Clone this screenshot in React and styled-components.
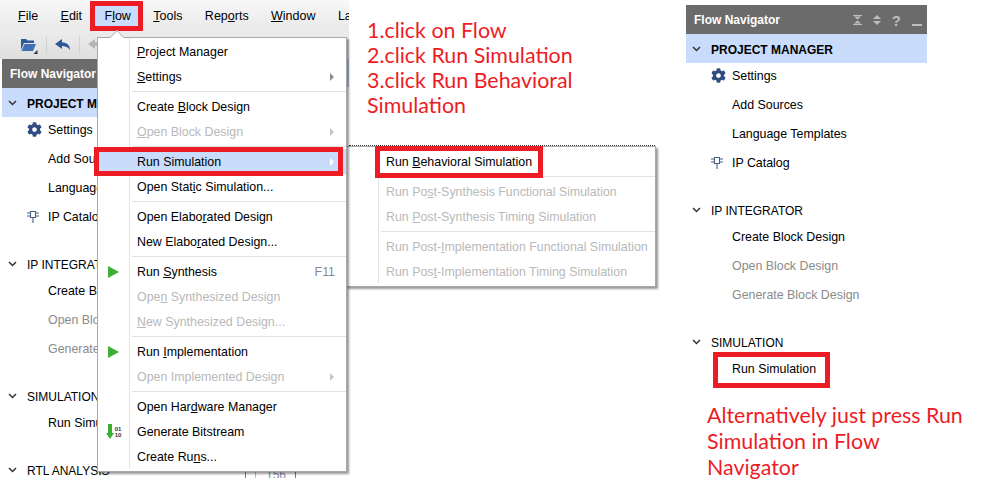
import styled, { createGlobalStyle } from "styled-components";
import { FaCog } from "react-icons/fa";

const GlobalStyle = createGlobalStyle`
  html, body {
    margin: 0;
    background: #fff;
  }
`;

const RED = "#ed1c24";
const SELECTED = "#c9dcfb";

const Page = styled.div`
  position: relative;
  display: flex;
  width: 995px;
  height: 492px;
  overflow: hidden;
  font-family: "Liberation Sans", Arial, sans-serif;
  font-size: 12.4px;
  color: #000;
`;

const Ide = styled.div`
  display: flex;
  flex-direction: column;
  flex: 0 0 349px;
  height: 478px;
  overflow: hidden;
`;

const MenuBar = styled.div`
  display: flex;
  flex: 0 0 30px;
  align-items: center;
  gap: 22.4px;
  padding: 1px 0 0 18px;
  box-sizing: border-box;
  font-size: 12.5px;
  background: linear-gradient(#f8f8f8, #e9e9e9);
  isolation: isolate;
`;

const MenuName = styled.span`
  position: relative;
  white-space: nowrap;
`;

const Mark = styled.span`
  position: absolute;
  border: 5px solid ${RED};
  box-sizing: border-box;
  pointer-events: none;
`;

const FlowMark = styled(Mark)`
  left: -14px;
  top: -8px;
  width: 53px;
  height: 30px;
  background: ${SELECTED};
  z-index: -1;
`;

const Toolbar = styled.div`
  display: flex;
  flex: 0 0 29px;
  align-items: center;
  gap: 8px;
  padding-left: 20px;
  background: linear-gradient(#ececec, #dfdfdf);
`;

const ToolDivider = styled.span`
  width: 1px;
  height: 18px;
  background: #d2d2d2;
`;

const Workspace = styled.div`
  display: flex;
  flex: 1;
  min-height: 0;
`;

const LeftPanel = styled.div`
  flex: 0 0 243px;
  margin-left: 2px;
`;

const Editor = styled.div`
  display: flex;
  flex: 1;
  flex-direction: column;
  justify-content: flex-end;
  border-left: 1px solid #777;
`;

const EditorTabs = styled.div`
  height: 28px;
  margin-bottom: auto;
  background: #b9c9e4;
`;

const Gutter = styled.div`
  width: 41px;
  margin-left: 9px;
  padding-left: 10px;
  height: 9px;
  border-left: 1px solid #bbb;
  border-right: 1px solid #777;
  font-size: 12px;
  line-height: 13px;
  color: #8a8fa8;
  overflow: hidden;
  box-sizing: border-box;
`;

/* Flow Navigator */
const NavHeader = styled.div`
  display: flex;
  align-items: center;
  height: 29px;
  padding: 1px 5px 0 8px;
  box-sizing: border-box;
  background: #6b6b6b;
  color: #fff;
  font-weight: bold;
  font-size: 12px;
  white-space: nowrap;
`;

const NavTools = styled.div`
  display: flex;
  align-items: center;
  gap: 11px;
  margin-left: auto;
  color: #bdbdbd;
  font-size: 15px;
`;

const NavSection = styled.section`
  margin-bottom: 18px;
`;

const NavHead = styled.div`
  display: flex;
  align-items: center;
  gap: 10px;
  height: 29px;
  padding: 2px 0 0 6px;
  box-sizing: border-box;
  font-size: 12px;
  white-space: nowrap;
  background: ${(p) => (p.$active ? SELECTED : "transparent")};
  font-weight: ${(p) => (p.$active ? "bold" : "normal")};
`;

const NavList = styled.div`
  margin-top: -2px;
`;

const NavItem = styled.div`
  position: relative;
  display: flex;
  align-items: center;
  height: 29px;
  padding-left: 46px;
  white-space: nowrap;
  color: ${(p) => (p.$disabled ? "#8b8b8b" : "#000")};
`;

const NavIcon = styled.span`
  position: absolute;
  left: 25px;
  top: 0;
  bottom: 0;
  display: flex;
  align-items: center;
  color: #2f4d82;
`;

const NavMark = styled(Mark)`
  left: 27px;
  top: -2px;
  width: 117px;
  height: 36px;
`;

/* Menus */
const Menu = styled.div`
  position: absolute;
  box-sizing: border-box;
  padding: 1px 0 2px;
  background: #fff;
  border: 1px solid #a8a8a8;
  box-shadow: 2px 2px 2px rgba(0, 0, 0, 0.4);

  &::before {
    content: "";
    position: absolute;
    left: 31px;
    top: 0;
    bottom: 3px;
    width: 1px;
    background: #e4e4e4;
  }
`;

const FlowMenu = styled(Menu)`
  left: 97px;
  top: 37px;
  width: 250px;
  z-index: 3;
`;

const Notch = styled.span`
  position: absolute;
  left: 14px;
  top: -6px;
  width: 9px;
  height: 9px;
  background: #fff;
  transform: rotate(45deg);
  border: 1px solid #bbb;
  border-right: none;
  border-bottom: none;
`;

const SubMenu = styled(Menu)`
  left: 346px;
  top: 146px;
  width: 310px;
  height: 141px;
  padding-top: 2px;
  z-index: 2;
`;

const DottedEdge = styled.span`
  position: absolute;
  left: 2px;
  right: 0;
  top: -2px;
  border-top: 1px dotted #333;
`;

const Item = styled.div`
  position: relative;
  display: grid;
  grid-template-columns: 39px 1fr auto 20px;
  align-items: center;
  height: 25px;
  white-space: nowrap;
  color: ${(p) => (p.$disabled ? "#b9b9b9" : "#000")};
  background: ${(p) => (p.$selected ? SELECTED : "transparent")};
`;

const IsolatedItem = styled(Item)`
  isolation: isolate;
`;

const ItemIcon = styled.span`
  display: flex;
  justify-content: center;
  align-items: center;
  padding-right: 8px;
`;

const Shortcut = styled.span`
  margin-right: -9px;
  color: #8a8a8a;
`;

const Arrow = styled.span`
  grid-column: 4;
  justify-self: center;
  margin-right: 8px;
  width: 0;
  height: 0;
  border-top: 4px solid transparent;
  border-bottom: 4px solid transparent;
  border-left: 4px solid ${(p) => p.$color || "#8d8d8d"};
`;

const Separator = styled.div`
  height: 1px;
  margin: 2px 0 2px 34px;
  background: #e2e2e2;
`;

const RunSimMark = styled(Mark)`
  left: -4px;
  top: -2px;
  width: 249px;
  height: 29px;
  z-index: 4;
`;

const BehavioralMark = styled(Mark)`
  left: 28px;
  top: -3px;
  width: 168px;
  height: 32px;
  background: #fff;
  z-index: -1;
`;

const SubItemLabel = styled.span`
  position: relative;
  z-index: 1;
`;

const BitCode = styled.span`
  font-size: 6px;
  font-weight: bold;
  line-height: 6px;
  color: #333;
  margin-left: 1px;
`;

/* Notes column */
const NotesColumn = styled.div`
  flex: 0 0 319px;
  padding: 18px 0 0 18px;
`;

const Note = styled.p`
  margin: 0;
  font-family: Lato, "Open Sans", sans-serif;
  font-size: 21.4px;
  color: ${RED};
  line-height: 25px;
  width: ${(p) => p.$width}px;
`;

const SideColumn = styled.div`
  display: flex;
  flex-direction: column;
  padding-top: 5px;
`;

const SidePanel = styled.div`
  width: 241px;
`;

const SideNote = styled(Note)`
  margin: 1px 0 0 21px;
  line-height: 26px;
`;

const Chevron = () => (
  <svg width="9" height="7" viewBox="0 0 9 7" fill="none" stroke="#333" strokeWidth="1.5">
    <path d="M1 1l3.500 3.500L8 1" />
  </svg>
);

const ChipIcon = () => (
  <svg width="12" height="13" viewBox="0 0 12 13" fill="none" stroke="#4a6087" strokeWidth="1.1">
    <path d="M3.500 1.500h5v6h-5zM6 7.500V13M0 3h3.500M0 6h3.500M8.500 3H12M8.500 6H12" />
  </svg>
);

const FolderIcon = () => (
  <svg width="18" height="18" viewBox="0 0 18 18">
    <path d="M1 3h5l1.500 1.500H14V7H4L1 14z" fill="#2f5a9a" />
    <path d="M1.500 15l3-7H16l-3 7z" fill="#3f6fb5" />
    <path d="M17.500 18h-4l4-4z" fill="#333" />
  </svg>
);

const UndoIcon = ({ color }) => (
  <svg width="16" height="12" viewBox="0 0 16 12">
    <path d="M7 0L0 5l7 5V7c3 0 6 1 8 4 0-5-3-7.500-8-7.500z" fill={color} />
  </svg>
);

const PlayIcon = () => (
  <svg width="11" height="12" viewBox="0 0 11 12">
    <path d="M0 0l11 6L0 12z" fill="#3cae33" />
  </svg>
);

const BitstreamIcon = () => (
  <>
    <svg width="8" height="15" viewBox="0 0 8 15">
      <path d="M2 0h4v9h2l-4 6-4-6h2z" fill="#3cae33" />
    </svg>
    <BitCode>
      01
      <br />
      10
    </BitCode>
  </>
);

const CollapseIcon = () => (
  <svg width="9" height="10" viewBox="0 0 9 10" fill="#bdbdbd">
    <path d="M0 0h9v1H0zM1 1.500h7L4.500 4.500zM4.500 5.500L8 8.500H1zM0 9h9v1H0z" />
  </svg>
);

const SortIcon = () => (
  <svg width="8" height="10" viewBox="0 0 8 10" fill="#bdbdbd">
    <path d="M4 0l4 4H0zM0 6h8l-4 4z" />
  </svg>
);

const MinimizeIcon = () => (
  <svg width="10" height="12" viewBox="0 0 10 12" fill="#bdbdbd">
    <path d="M0 10h10v2H0z" />
  </svg>
);

const navSections = [
  {
    title: "PROJECT MANAGER",
    active: true,
    items: [
      { label: "Settings", icon: <FaCog size={15} /> },
      { label: "Add Sources" },
      { label: "Language Templates" },
      { label: "IP Catalog", icon: <ChipIcon /> },
    ],
  },
  {
    title: "IP INTEGRATOR",
    items: [
      { label: "Create Block Design" },
      { label: "Open Block Design", disabled: true },
      { label: "Generate Block Design", disabled: true },
    ],
  },
  {
    title: "SIMULATION",
    items: [{ label: "Run Simulation", marked: true }],
  },
];

const FlowNavigator = ({ showTools, marked, extraSection }) => (
  <>
    <NavHeader>
      Flow Navigator
      {showTools && (
        <NavTools>
          <CollapseIcon />
          <SortIcon />
          <span>?</span>
          <MinimizeIcon />
        </NavTools>
      )}
    </NavHeader>
    {navSections.map((section) => (
      <NavSection key={section.title}>
        <NavHead $active={section.active}>
          <Chevron />
          {section.title}
        </NavHead>
        <NavList>
          {section.items.map((item) => (
            <NavItem key={item.label} $disabled={item.disabled}>
              {item.icon && <NavIcon>{item.icon}</NavIcon>}
              {item.label}
              {marked && item.marked && <NavMark />}
            </NavItem>
          ))}
        </NavList>
      </NavSection>
    ))}
    {extraSection && (
      <NavHead>
        <Chevron />
        {extraSection}
      </NavHead>
    )}
  </>
);

const App = () => {
  return (
    <Page>
      <GlobalStyle />
      <Ide>
        <MenuBar>
          <MenuName><u>F</u>ile</MenuName>
          <MenuName><u>E</u>dit</MenuName>
          <MenuName>
            F<u>l</u>ow
            <FlowMark />
          </MenuName>
          <MenuName><u>T</u>ools</MenuName>
          <MenuName>Rep<u>o</u>rts</MenuName>
          <MenuName><u>W</u>indow</MenuName>
          <MenuName>La</MenuName>
        </MenuBar>
        <Toolbar>
          <FolderIcon />
          <ToolDivider />
          <UndoIcon color="#2f5a9a" />
          <ToolDivider />
          <UndoIcon color="#b5b5b5" />
        </Toolbar>
        <Workspace>
          <LeftPanel>
            <FlowNavigator extraSection="RTL ANALYSIS" />
          </LeftPanel>
          <Editor>
            <EditorTabs />
            <Gutter>156</Gutter>
          </Editor>
        </Workspace>
      </Ide>

      <FlowMenu>
        <Notch />
        <Item><span /><span><u>P</u>roject Manager</span></Item>
        <Item><span /><span><u>S</u>ettings</span><span /><Arrow /></Item>
        <Separator />
        <Item><span /><span>Create <u>B</u>lock Design</span></Item>
        <Item $disabled><span /><span><u>O</u>pen Block Design</span><span /><Arrow $color="#c4c4c4" /></Item>
        <Separator />
        <Item $selected>
          <span />
          <span>Run Simulation</span>
          <span />
          <Arrow $color="#fff" />
          <RunSimMark />
        </Item>
        <Item><span /><span>Open Stat<u>i</u>c Simulation...</span></Item>
        <Separator />
        <Item><span /><span>Open Elabo<u>r</u>ated Design</span></Item>
        <Item><span /><span>New Elabo<u>r</u>ated Design...</span></Item>
        <Separator />
        <Item>
          <ItemIcon><PlayIcon /></ItemIcon>
          <span>Run <u>S</u>ynthesis</span>
          <Shortcut>F11</Shortcut>
        </Item>
        <Item $disabled><span /><span>Ope<u>n</u> Synthesized Design</span></Item>
        <Item $disabled><span /><span><u>N</u>ew Synthesized Design...</span></Item>
        <Separator />
        <Item>
          <ItemIcon><PlayIcon /></ItemIcon>
          <span>Run <u>I</u>mplementation</span>
        </Item>
        <Item $disabled><span /><span>Open Implemented Design</span><span /><Arrow $color="#c4c4c4" /></Item>
        <Separator />
        <Item><span /><span>Open Har<u>d</u>ware Manager</span></Item>
        <Item>
          <ItemIcon><BitstreamIcon /></ItemIcon>
          <span>Generate Bitstream</span>
        </Item>
        <Item><span /><span>Create Ru<u>n</u>s...</span></Item>
      </FlowMenu>

      <SubMenu>
        <DottedEdge />
        <IsolatedItem>
          <span />
          <SubItemLabel>Run <u>B</u>ehavioral Simulation</SubItemLabel>
          <BehavioralMark />
        </IsolatedItem>
        <Separator />
        <Item $disabled><span /><span>Run Po<u>s</u>t-Synthesis Functional Simulation</span></Item>
        <Item $disabled><span /><span>Run <u>P</u>ost-Synthesis Timing Simulation</span></Item>
        <Separator />
        <Item $disabled><span /><span>Run Post-<u>I</u>mplementation Functional Simulation</span></Item>
        <Item $disabled><span /><span>Run Pos<u>t</u>-Implementation Timing Simulation</span></Item>
      </SubMenu>

      <NotesColumn>
        <Note $width={230}>
          1.click on Flow
          <br />
          2.click Run Simulation
          <br />
          3.click Run Behavioral Simulation
        </Note>
      </NotesColumn>

      <SideColumn>
        <SidePanel>
          <FlowNavigator showTools marked />
        </SidePanel>
        <SideNote $width={262}>
          Alternatively just press Run Simulation in Flow Navigator
        </SideNote>
      </SideColumn>
    </Page>
  );
};

export default App;
